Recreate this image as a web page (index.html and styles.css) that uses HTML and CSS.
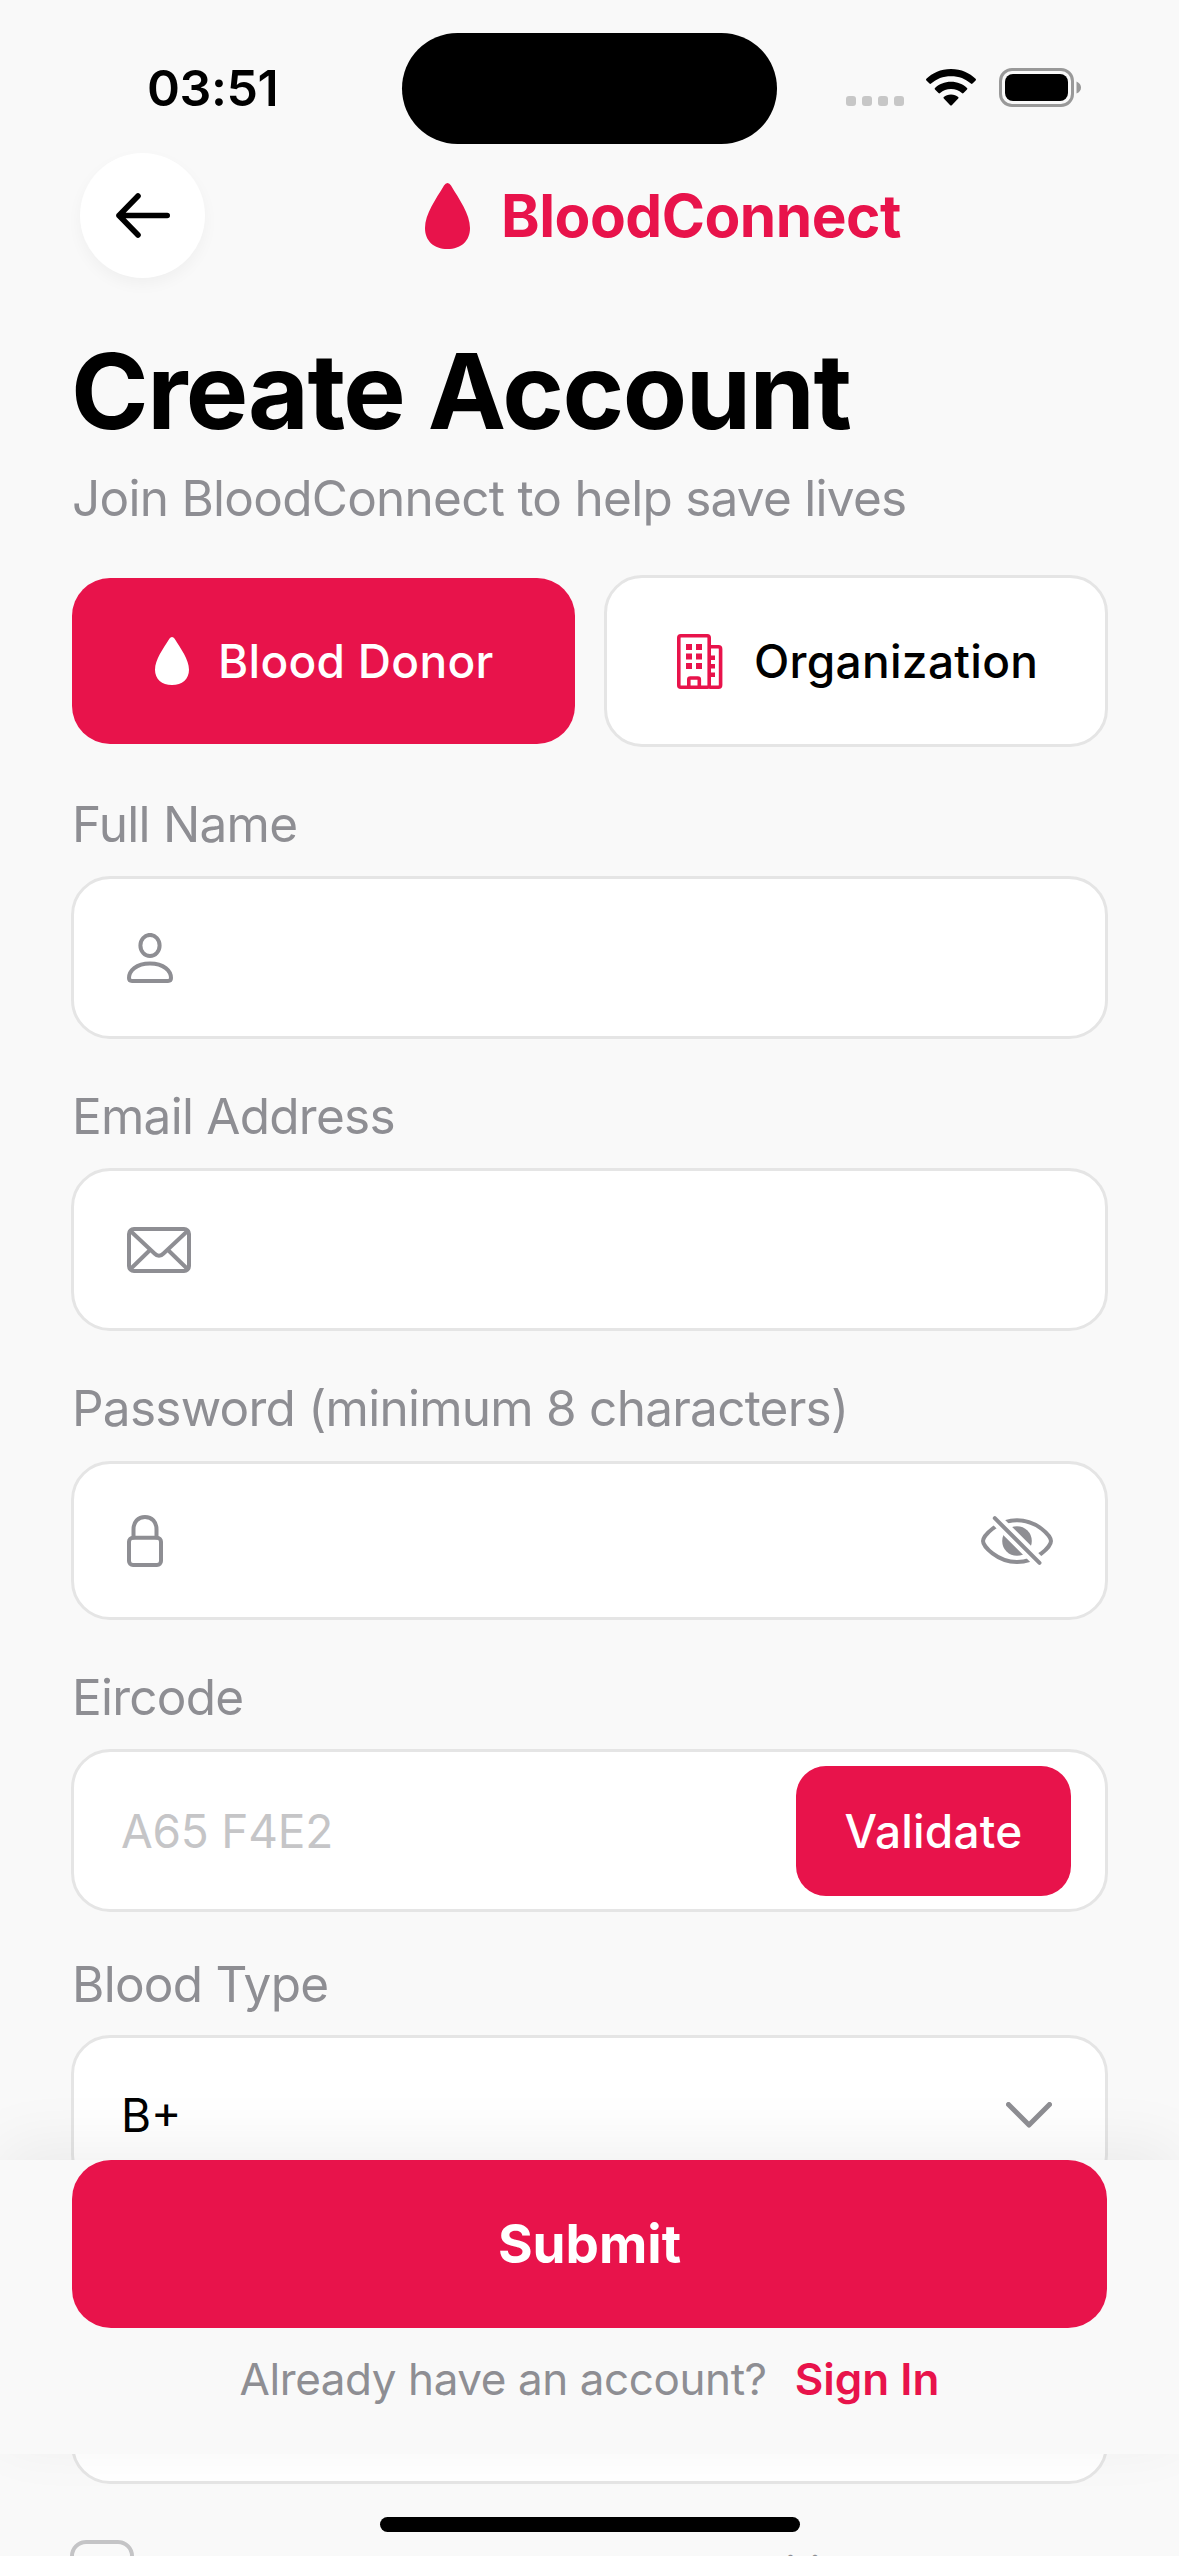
FILE: index.html
```html
<!DOCTYPE html>
<html lang="en">
<head>
<meta charset="utf-8">
<title>BloodConnect – Create Account</title>
<link rel="stylesheet" href="styles.css">
</head>
<body>
<div class="screen">
  <header class="status-bar">
    <div class="status-side"><span class="clock">03:51</span></div>
    <div class="island"></div>
    <div class="status-side status-icons">
      <div class="signal"><i></i><i></i><i></i><i></i></div>
      <svg class="wifi" viewBox="0 0 50 37" width="50" height="37">
        <path d="M25 0C35.500 0 43.500 4 49.600 9.800Q50.400 10.600 49.600 11.400L46.500 14.600Q45.700 15.300 44.900 14.600C39.500 9.700 33 7.200 25 7.200S10.500 9.700 5.100 14.600Q4.300 15.300 3.500 14.600L.4 11.400Q-.4 10.600 .4 9.800C6.500 4 14.500 0 25 0Z"/>
        <path d="M25 12.700C31.500 12.700 36.800 15 41 18.900Q41.800 19.700 41 20.500L37.500 24Q36.700 24.800 35.900 24C32.800 21.300 29.300 19.900 25 19.900S17.200 21.300 14.100 24Q13.300 24.800 12.500 24L9 20.500Q8.200 19.700 9 18.900C13.200 15 18.500 12.700 25 12.700Z"/>
        <path d="M25 25.400C28 25.400 30.400 26.500 32.200 28Q33 28.800 32.200 29.600L25.800 36.200Q25 37 24.200 36.200L17.800 29.600Q17 28.800 17.800 28C19.600 26.500 22 25.400 25 25.400Z"/>
      </svg>
      <svg class="battery" viewBox="0 0 82 39" width="82" height="39">
        <rect x="1.500" y="1.500" width="72" height="36" rx="11.500" fill="none" stroke="#999" stroke-width="3"/>
        <rect x="6" y="6" width="63" height="27" rx="8"/>
        <path d="M77.500 13.500Q82 15.500 82 19.500T77.500 25.500Z" fill="#999"/>
      </svg>
    </div>
  </header>

  <nav class="nav-bar">
    <div class="back">
      <svg viewBox="0 0 54 45" width="54" height="45" fill="none" stroke="#000" stroke-width="5.600" stroke-linecap="round" stroke-linejoin="round"><path d="M51.200 22.500H3M22 3L3 22.500L22 42"/></svg>
    </div>
    <div class="brand">
      <svg viewBox="0 0 45 66" width="45" height="66"><path fill="#e8134b" d="M22.500 0Q24.500 0 26 2.500C34 16 45 31 45 45C45 58 36 66 22.500 66S0 58 0 45C0 31 11 16 19 2.500Q20.500 0 22.500 0Z"/></svg>
      <span class="brand-name">BloodConnect</span>
    </div>
  </nav>

  <main class="content">
    <h1 class="title">Create Account</h1>
    <p class="subtitle">Join BloodConnect to help save lives</p>

    <div class="tabs">
      <div class="tab tab-active">
        <svg viewBox="0 0 45 66" width="34" height="48" preserveAspectRatio="none"><path fill="#fff" d="M22.500 0Q24.500 0 26 2.500C34 16 45 31 45 45C45 58 36 66 22.500 66S0 58 0 45C0 31 11 16 19 2.500Q20.500 0 22.500 0Z"/></svg>
        <span>Blood Donor</span>
      </div>
      <div class="tab tab-plain">
        <svg viewBox="0 0 46 55" width="46" height="55" fill="none" stroke="#e8134b" stroke-width="3.600" stroke-linejoin="round">
          <rect x="1.800" y="1.800" width="30.400" height="51.400" rx="2"/>
          <path d="M32.200 12.800H41.500Q43.600 12.800 43.600 14.900V51.100Q43.600 53.200 41.500 53.200H32.200M11.800 53V45.500Q11.800 44 13.300 44H20.800Q22.300 44 22.300 45.500V53"/>
          <path stroke="none" fill="#e8134b" d="M9 10h6v6h-6zM19 10h6v6h-6zM9 19.500h6v6h-6zM19 19.500h6v6h-6zM9 29h6v6h-6zM19 29h6v6h-6zM33.500 21.500h4.500v4.500h-4.500zM33.500 30h4.500v4.500h-4.500zM33.500 38.500h4.500v4.500h-4.500z"/>
        </svg>
        <span>Organization</span>
      </div>
    </div>

    <div class="group">
      <div class="label">Full Name</div>
      <div class="field">
        <svg class="icon" viewBox="0 0 46 50" width="46" height="50">
          <ellipse cx="23" cy="12.500" rx="9.600" ry="10.600"/>
          <path d="M5 47.900Q2 47.900 2 45C2 38 9 30.400 23 30.400S44 38 44 45Q44 47.900 41 47.900Z"/>
        </svg>
      </div>
    </div>

    <div class="group">
      <div class="label">Email Address</div>
      <div class="field">
        <svg class="icon" viewBox="0 0 64 46" width="64" height="46">
          <rect x="2" y="2" width="60" height="42" rx="5"/>
          <path d="M3.500 4L27.500 26.500Q32 31 36.500 26.500L60.500 4M3.500 42L23 23M60.500 42L41 23"/>
        </svg>
      </div>
    </div>

    <div class="group group-password">
      <div class="label">Password (minimum 8 characters)</div>
      <div class="field field-password">
        <svg class="icon" viewBox="0 0 36 52" width="36" height="52">
          <rect x="2" y="22.800" width="32" height="27.200" rx="4"/>
          <path d="M6.500 22.500V14.500C6.500 7 11 2 18 2S29.500 7 29.500 14.500V22.500"/>
        </svg>
        <svg class="icon eye" viewBox="0 0 72 49" width="72" height="49">
          <defs>
            <mask id="slash-gap" maskUnits="userSpaceOnUse" x="0" y="0" width="72" height="49">
              <rect width="72" height="49" fill="#fff" stroke="none"/>
              <path d="M4 -7.600L68 56.300" stroke="#000" stroke-width="12"/>
            </mask>
          </defs>
          <g mask="url(#slash-gap)">
            <path d="M2 25C2 20 16 4.200 36 4.200S70 20 70 25S56 46 36 46S2 30 2 25Z"/>
            <circle cx="36" cy="25" r="14.800" class="pupil"/>
          </g>
          <path d="M13.800 2.200L58.500 46.800"/>
        </svg>
      </div>
    </div>

    <div class="group">
      <div class="label">Eircode</div>
      <div class="field field-text">
        <span class="placeholder">A65 F4E2</span>
        <div class="validate">Validate</div>
      </div>
    </div>

    <div class="group group-select">
      <div class="label">Blood Type</div>
      <div class="field field-text field-select">
        <span>B+</span>
        <svg class="chevron" viewBox="0 0 46 26" width="46" height="26"><path d="M2.500 2.500L23 23L43.500 2.500"/></svg>
      </div>
    </div>

    <div class="field field-last"></div>

    <div class="terms">
      <div class="checkbox"></div>
      <span class="terms-text">I agree to the Terms and Conditions</span>
    </div>
  </main>

  <footer class="footer">
    <div class="submit">Submit</div>
    <div class="signin-row"><span class="question">Already have an account?</span><span class="signin">Sign In</span></div>
  </footer>
  <div class="home-indicator"></div>
</div>
</body>
</html>
```
FILE: styles.css
```css
* { box-sizing: border-box; }
body {
  margin: 0;
  background: #f9f9f9;
  font-family: Inter, "Liberation Sans", sans-serif;
  color: #000;
}
h1, p { margin: 0; font-weight: inherit; }
svg { display: block; flex: none; }
span { white-space: nowrap; }

.screen {
  position: relative;
  width: 1179px;
  height: 2556px;
  overflow: hidden;
  background: #f9f9f9;
}

/* status bar */
.status-bar {
  display: grid;
  grid-template-columns: 402px 375px 402px;
  height: 153px;
  padding-top: 33px;
}
.status-side { height: 111px; display: flex; align-items: center; }
.clock { padding: 0 0 1px 147px; font-size: 50px; font-weight: 600; line-height: 60px; letter-spacing: -0.4px; }
.island { height: 111px; border-radius: 56px; background: #000; }
.status-icons { padding: 0 0 2px 69px; }
.signal { display: flex; gap: 6px; padding-top: 27px; }
.signal i { width: 10px; height: 10px; border-radius: 3px; background: #c7c7c7; }
.wifi { margin-left: 22px; }
.battery { margin-left: 23px; }

/* navigation */
.nav-bar { display: flex; height: 125px; padding-left: 80px; align-items: center; }
.back {
  display: flex;
  align-items: center;
  justify-content: center;
  width: 125px;
  height: 125px;
  border-radius: 50%;
  background: #fff;
  box-shadow: 0 6px 15px rgba(0, 0, 0, 0.04);
}
.brand { display: flex; align-items: center; margin-left: 220px; gap: 31px; }
.brand-name { font-size: 58.5px; font-weight: 700; line-height: 70px; letter-spacing: -0.5px; color: #e8134b; }

/* form */
.content { padding: 50px 71px 0; }
.title { font-size: 105px; line-height: 126px; font-weight: 700; letter-spacing: -1.5px; }
.subtitle { margin-top: 14px; padding-left: 1px; font-size: 49.5px; line-height: 60px; letter-spacing: -0.74px; color: #8e8e93; }

.tabs { display: flex; align-items: center; gap: 29px; height: 172px; margin: 47px 0 47px 1px; }
.tab {
  display: flex;
  align-items: center;
  border-radius: 38px;
  font-size: 46px;
  font-weight: 500;
  line-height: 56px;
  letter-spacing: 0.3px;
}
.tab-active { width: 503px; height: 166px; padding-left: 83px; gap: 29px; background: #e8134b; color: #fff; }
.tab-plain { width: 504px; height: 172px; padding-left: 70px; gap: 31px; background: #fff; border: 3px solid #e5e5e5; }

.group { display: flex; flex-direction: column; gap: 22px; margin-bottom: 47px; }
.label { padding-left: 1px; font-size: 49.5px; line-height: 60px; letter-spacing: -0.75px; color: #8e8e93; }
.field {
  display: flex;
  align-items: center;
  height: 163px;
  padding: 0 52px 0 53px;
  border: 3px solid #e5e5e5;
  border-radius: 39px;
  background: #fff;
}
.icon { fill: none; stroke: #8e8e93; stroke-width: 4; stroke-linecap: round; stroke-linejoin: round; }
.group-password { gap: 23px; }
.field-password { height: 159px; }
.eye { margin-left: auto; }
.pupil { fill: #8e8e93; stroke: none; }
.field-text { justify-content: space-between; padding: 0 34px 0 47px; font-size: 46px; line-height: 56px; }
.placeholder { color: #c5c5c7; letter-spacing: -0.2px; }
.validate {
  display: flex;
  align-items: center;
  justify-content: center;
  width: 275px;
  height: 130px;
  border-radius: 30px;
  background: #e8134b;
  color: #fff;
  font-weight: 500;
  letter-spacing: 0.2px;
}
.group-select { margin: -5px 0 0; gap: 21px; }
.field-select { height: 159px; }
.chevron { margin-right: 19px; fill: none; stroke: #8e8e93; stroke-width: 5; stroke-linecap: round; stroke-linejoin: round; }
.field-last { margin-top: 127px; }
.terms { display: flex; align-items: flex-start; gap: 24px; margin-top: 56px; }
.checkbox { width: 64px; height: 64px; margin-left: -1px; border: 4px solid #c4c4c6; border-radius: 16px; flex: none; }
.terms-text { margin-top: 5px; font-size: 45px; line-height: 56px; letter-spacing: -0.6px; color: #8e8e93; }

/* sticky footer */
.footer {
  position: absolute;
  left: 0;
  top: 2160px;
  width: 1179px;
  height: 294px;
  padding: 0 72px;
  background: #f9f9f9;
  box-shadow: 0 -15px 60px rgba(0, 0, 0, 0.06);
}
.submit {
  display: flex;
  align-items: center;
  justify-content: center;
  height: 168px;
  border-radius: 39px;
  background: #e8134b;
  color: #fff;
  font-size: 53px;
  font-weight: 700;
}
.signin-row { display: flex; justify-content: center; gap: 28px; margin-top: 24px; font-size: 44px; line-height: 54px; }
.question { color: #8e8e93; letter-spacing: -0.42px; }
.signin { color: #e8134b; font-weight: 600; }
.home-indicator {
  position: absolute;
  left: 380px;
  top: 2517px;
  width: 420px;
  height: 15px;
  border-radius: 8px;
  background: #000;
}
```
